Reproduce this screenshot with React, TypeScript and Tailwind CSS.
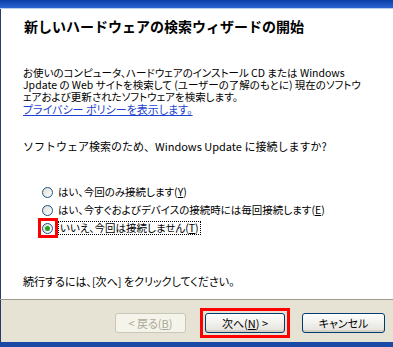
import React from 'react';

const jp = "font-['Noto_Sans_CJK_JP','Noto_Sans',sans-serif]";
const palt = "[font-feature-settings:'palt']";

const Radio: React.FC<{ checked?: boolean }> = ({ checked }) => (
  <span className="w-[11px] h-[11px] rounded-full border border-[#1c5180] bg-gradient-to-br from-[#dcdcd7] to-white flex items-center justify-center shrink-0">
    {checked && <span className="w-[5px] h-[5px] rounded-full bg-[#21a121]" />}
  </span>
);

const XPButton: React.FC<{ disabled?: boolean; children: React.ReactNode; className?: string }> = ({ disabled, children, className }) => (
  <button
    className={
      disabled
        ? `h-[20px] rounded-[3px] border border-[#c9c7ba] bg-[#f5f4ea] text-[#aca899] text-[11px] leading-none flex items-center justify-center ${palt} ${className}`
        : `h-[20px] rounded-[3px] border border-[#003c74] bg-gradient-to-b from-white to-[#e3e2da] text-black text-[11px] leading-none flex items-center justify-center shadow-[inset_0_-2px_0_#d6d0c5] ${palt} ${className}`
    }
  >
    {children}
  </button>
);

export default function App() {
  return (
    <div className={`w-[393px] h-[347px] bg-white flex flex-col overflow-hidden ${jp}`}>
      <div className="h-[8px] bg-gradient-to-b from-[#0a3ea8] to-[#2a63d2]" />
      <div className="h-px bg-[#b9cdee]" />

      <div className="flex-1 border-l border-[#2a3a6a] pl-[22px] pt-[8px] flex flex-col">
        <h1 className="text-[14px] leading-[18px] font-bold text-black ml-px">
          新しいハードウェアの検索ウィザードの開始
        </h1>

        <div className={`mt-[32px] text-[10.5px] leading-[12px] text-black ${palt}`}>
          <div className="whitespace-nowrap">お使いのコンピュータ、ハードウェアのインストール CD または Windows</div>
          <div className="whitespace-nowrap">Jpdate の Web サイトを検索して (ユーザーの了解のもとに) 現在のソフトウ</div>
          <div className="whitespace-nowrap">ェアおよび更新されたソフトウェアを検索します。</div>
          <div className="whitespace-nowrap text-[11px] text-[#1e3fd0] underline underline-offset-[1px]">プライバシー ポリシーを表示します。</div>
        </div>

        <div className="mt-[25px] text-[11px] leading-[12px] text-black whitespace-nowrap">
          ソフトウェア検索のため、Windows Update に接続しますか?
        </div>

        <div className={`mt-[31px] ml-[19px] flex flex-col text-[10.5px] text-black ${palt}`}>
          <div className="h-[18px] flex items-center gap-[5px]">
            <Radio />
            <span>はい、今回のみ接続します(<span className="underline">Y</span>)</span>
          </div>
          <div className="h-[18px] flex items-center gap-[5px]">
            <Radio />
            <span>はい、今すぐおよびデバイスの接続時には毎回接続します(<span className="underline">E</span>)</span>
          </div>
          <div className="h-[18px] flex items-center gap-[5px] relative">
            <Radio checked />
            <span className="border border-dotted border-black px-[1px] leading-[12px]">
              いいえ、今回は接続しません(<span className="underline">T</span>)
            </span>
            <span className="absolute left-[-4px] top-[-1px] w-[20px] h-[20px] border-[3px] border-[#ff0000]" />
          </div>
        </div>

        <div className={`mt-[38px] text-[11px] leading-[12px] text-black whitespace-nowrap ${palt}`}>
          続行するには、[次へ] をクリックしてください。
        </div>
      </div>

      <div className="h-px bg-[#9d9b91]" />
      <div className="h-[42px] bg-[#e6e3d5] border-l border-[#2a3a6a] flex items-center pl-[114px] pt-[4px]">
        <XPButton disabled className="w-[71px]">
          &lt; 戻る(<span className="underline">B</span>)
        </XPButton>
        <div className="ml-[14px] border-[3px] border-[#ff0000] p-[2px]">
          <XPButton className="w-[80px]">
            次へ(<span className="underline">N</span>) &gt;
          </XPButton>
        </div>
        <XPButton className="w-[83px] ml-[12px]">キャンセル</XPButton>
      </div>
      <div className="h-[5px] bg-[#1a4aa6]" />
    </div>
  );
}
